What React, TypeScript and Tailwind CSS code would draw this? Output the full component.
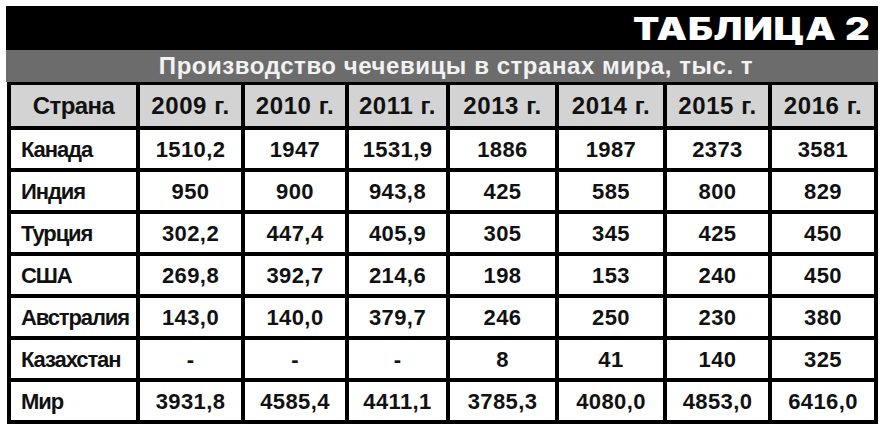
const years = ['2009 г.', '2010 г.', '2011 г.', '2013 г.', '2014 г.', '2015 г.', '2016 г.'];

const rows: [string, string[]][] = [
  ['Канада', ['1510,2', '1947', '1531,9', '1886', '1987', '2373', '3581']],
  ['Индия', ['950', '900', '943,8', '425', '585', '800', '829']],
  ['Турция', ['302,2', '447,4', '405,9', '305', '345', '425', '450']],
  ['США', ['269,8', '392,7', '214,6', '198', '153', '240', '450']],
  ['Австралия', ['143,0', '140,0', '379,7', '246', '250', '230', '380']],
  ['Казахстан', ['-', '-', '-', '8', '41', '140', '325']],
  ['Мир', ['3931,8', '4585,4', '4411,1', '3785,3', '4080,0', '4853,0', '6416,0']],
];

export default function App() {
  return (
    <div className="w-[885px] h-[429px] bg-white pt-[6px] pl-[6px] font-['Liberation_Sans',Arial,sans-serif]">
      <div className="w-[872px]">
        {/* title band */}
        <div className="h-[44px] bg-black flex items-center justify-end pr-[7px]">
          <span className="font-['Inter',sans-serif] font-black text-[31px] leading-none text-white tracking-[0.02em] scale-x-[1.24] origin-right">
            ТАБЛИЦА 2
          </span>
        </div>
        <div className="h-[32px] bg-[#6c6c6c] flex items-center justify-center pl-[28px]">
          <span className="text-[24px] font-bold text-[#f2f2f2] leading-none tracking-[0.55px]">
            Производство чечевицы в странах мира, тыс. т
          </span>
        </div>

        {/* table */}
        <div className="ml-px grid grid-cols-[125px_101px_100px_97px_105px_104px_101px_102px] grid-rows-[41px_repeat(7,38px)] gap-[4px] bg-black p-[4px] pt-[3px] w-[871px] text-[#111] font-bold">
          <div className="bg-[#d3d3d3] flex items-center justify-center text-[24px] tracking-[-0.6px]">Страна</div>
          {years.map((y) => (
            <div key={y} className="bg-[#d3d3d3] flex items-center justify-center text-[24px] tracking-[0.6px]">
              {y}
            </div>
          ))}
          {rows.map(([country, values]) => (
            <>
              <div key={country} className="bg-white flex items-center pl-[10px] text-[22px] tracking-[-1.1px]">
                {country}
              </div>
              {values.map((v, i) => (
                <div key={country + i} className="bg-white flex items-center justify-center text-[22px] tracking-[0.4px]">
                  {v}
                </div>
              ))}
            </>
          ))}
        </div>
      </div>
    </div>
  );
}
